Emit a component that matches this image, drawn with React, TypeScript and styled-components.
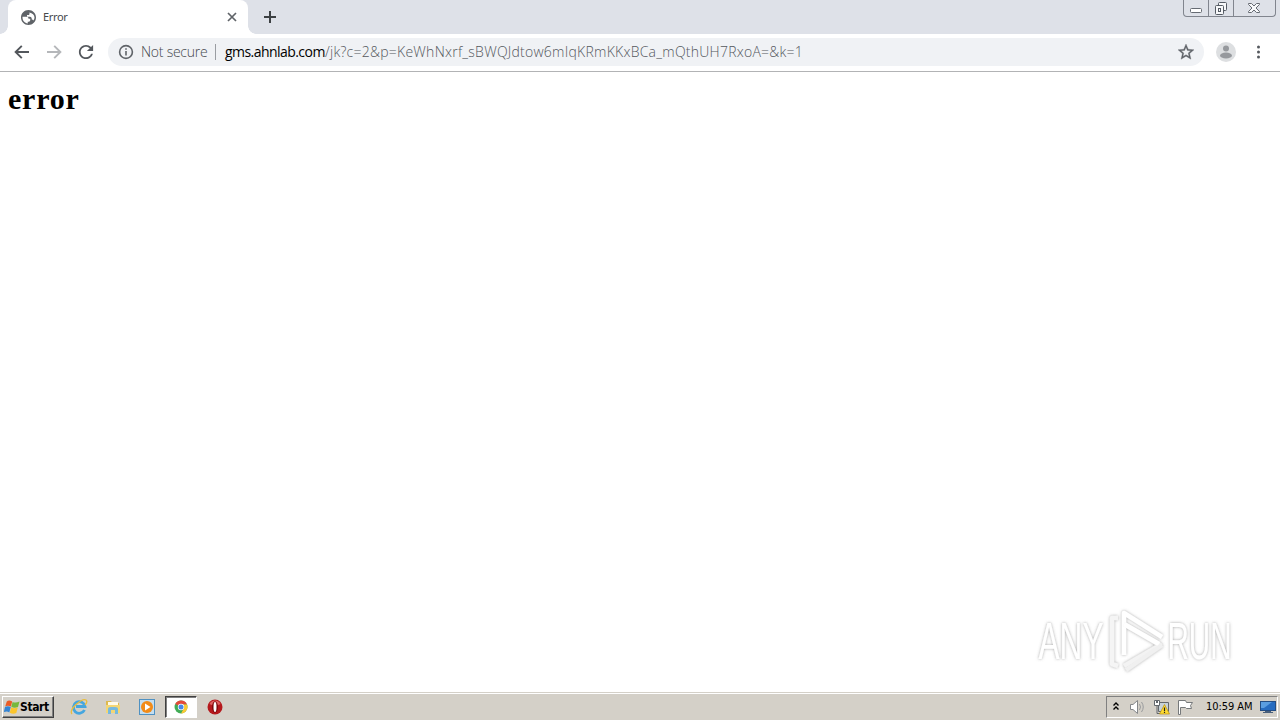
import React from 'react';
import styled, { createGlobalStyle } from 'styled-components';

const GlobalStyle = createGlobalStyle`
  body { margin: 0; background: #fff; overflow: hidden; }
  * { box-sizing: border-box; }
  svg { display: block; flex: none; }
`;

const Screen = styled.div`
  position: relative;
  width: 1280px;
  height: 720px;
  display: flex;
  flex-direction: column;
  font-family: 'DejaVu Sans Condensed', 'DejaVu Sans', sans-serif;
`;

const TabStrip = styled.div`
  height: 34px;
  display: flex;
  background: #dee1e8;
  padding-left: 8px;
`;

const Tab = styled.div`
  position: relative;
  width: 240px;
  display: flex;
  align-items: center;
  padding: 0 10px 0 13px;
  background: #fff;
  border-radius: 8px 8px 0 0;
  &::before, &::after {
    content: '';
    position: absolute;
    bottom: 0;
    width: 8px;
    height: 8px;
  }
  &::before { left: -8px; background: radial-gradient(circle at 0 0, transparent 7.5px, #fff 8px); }
  &::after { right: -8px; background: radial-gradient(circle at 100% 0, transparent 7.5px, #fff 8px); }
`;

const TabTitle = styled.span`
  flex: 1;
  margin-left: 7px;
  font: 11px/14px 'Noto Sans', sans-serif;
  letter-spacing: -0.35px;
  color: #45484c;
`;

const NewTab = styled.div`
  padding: 10px 0 0 15px;
`;

const WindowControls = styled.div`
  display: flex;
  width: 93px;
  height: 17px;
  margin: 0 4px 0 auto;
  border: 1px solid #81858e;
  border-top: 0;
  border-radius: 0 0 4px 4px;
`;

const ControlCell = styled.div<{ $w: number }>`
  width: ${p => p.$w}px;
  display: flex;
  justify-content: center;
  & + & { border-left: 1px solid #81858e; }
`;

const Toolbar = styled.div`
  height: 38px;
  display: flex;
  align-items: center;
  padding: 0 12px 2px 14px;
  border-bottom: 1px solid #b2b3b5;
  background: #fff;
`;

const NavButtons = styled.div`
  display: flex;
  gap: 16px;
  margin-right: 14px;
`;

const AddressBar = styled.div`
  flex: none;
  width: 1096px;
  height: 28px;
  display: flex;
  align-items: center;
  padding: 0 10px;
  border-radius: 14px;
  background: #f0f2f5;
  font: 300 14px/20px 'Open Sans', sans-serif;
  white-space: pre;
`;

const Security = styled.span`
  width: 67px;
  margin-left: 7px;
  color: #44484d;
  letter-spacing: -0.25px;
`;

const Divider = styled.i`
  width: 1px;
  height: 16px;
  margin: 0 9px 0 7px;
  background: #9a9da2;
`;

const Host = styled.span`
  width: 100px;
  color: #000;
  font-weight: 400;
  letter-spacing: -0.55px;
`;

const Path = styled.span`
  flex: 1;
  color: #54585d;
  letter-spacing: 0.25px;
`;

const ToolbarEnd = styled.div`
  display: flex;
  align-items: center;
  gap: 12px;
  margin-left: 12px;
`;

const Page = styled.main`
  flex: 1;
  background: #fff;
`;

const Heading = styled.h1`
  margin: 0;
  padding: 10px 8px;
  font: bold 30px/34px 'Liberation Serif', serif;
  letter-spacing: 0.8px;
  color: #000;
`;

const Watermark = styled.svg`
  position: absolute;
  left: 1030px;
  top: 602px;
`;

const Taskbar = styled.footer`
  height: 28px;
  display: flex;
  align-items: center;
  padding: 2px 2px 2px;
  border-top: 1px solid #d4d0c8;
  box-shadow: inset 0 1px #fff;
  background: #d4d0c8;
`;

const StartButton = styled.div`
  width: 52px;
  height: 22px;
  display: flex;
  align-items: center;
  padding-left: 1px;
  border: 1px solid;
  border-color: #fff #404040 #404040 #fff;
  box-shadow: inset -1px -1px #808080;
  font: bold 12px/16px 'DejaVu Sans Condensed', sans-serif;
  letter-spacing: -0.4px;
  color: #000;
`;

const Launchers = styled.div`
  display: flex;
  margin-left: 9px;
`;

const Launcher = styled.div<{ $active?: boolean }>`
  width: 32px;
  height: 22px;
  margin-right: 2px;
  display: flex;
  align-items: center;
  justify-content: center;
  ${p => p.$active && `
    background: #fff;
    border: 1px solid;
    border-color: #404040 #fff #fff #404040;
    box-shadow: inset 1px 1px #808080;
  `}
`;

const Tray = styled.div`
  width: 172px;
  height: 22px;
  margin-left: auto;
  display: flex;
  align-items: center;
  padding-left: 5px;
  border: 1px solid;
  border-color: #808080 #fff #fff #808080;
`;

const TrayIcons = styled.div`
  display: flex;
  align-items: center;
  gap: 8px;
`;

const Clock = styled.span`
  width: 47px;
  margin: 0 7px 0 12px;
  font: 11px/14px 'DejaVu Sans Condensed', sans-serif;
  letter-spacing: -0.05px;
  white-space: nowrap;
  color: #000;
`;

const Arrow = ({ color, flip }: { color: string; flip?: boolean }) => (
  <svg width="16" height="16" viewBox="0 0 16 16" fill="none" stroke={color} strokeWidth="1.9">
    <path d={flip ? 'M1 8H14M8.2 1.8L14.4 8L8.2 14.2' : 'M15 8H2M7.8 1.8L1.6 8L7.8 14.2'} />
  </svg>
);

export default function App() {
  return (
    <Screen>
      <GlobalStyle />
      <TabStrip>
        <Tab>
          <svg width="15" height="15" viewBox="2 2 20 20" fill="#5f6368">
            <path d="M12 2C6.48 2 2 6.48 2 12s4.48 10 10 10 10-4.480 10-10S17.520 2 12 2zm-1 17.930c-3.950-.490-7-3.850-7-7.930l.1-1 5.100.1c2 0 2.800 1 2.800 2.500h2.300v2.200c0 1-.8 1.700-1.900 1.700H11v2.430zM18.500 16c-.4-.8-1.100-1.200-2.100-1.200 0-2.700-.6-3.800-2.600-3.800H10V8.500h2c.8 0 1.300-.6 1.300-1.300V5.300c3.900.7 6.700 3.500 6.700 6.700 0 1.500-.5 2.800-1.500 4z" />
          </svg>
          <TabTitle>Error</TabTitle>
          <svg width="12" height="12" viewBox="0 0 12 12" stroke="#5f6368" strokeWidth="1.7"><path d="M2 2L10 10M10 2L2 10" /></svg>
        </Tab>
        <NewTab>
          <svg width="14" height="14" viewBox="0 0 14 14" stroke="#3c4043" strokeWidth="2"><path d="M1 7H13M7 1V13" /></svg>
        </NewTab>
        <WindowControls>
          <ControlCell $w={25}>
            <svg width="14" height="16" fill="#fff" stroke="#666b73"><rect x="1.500" y="8.500" width="11" height="4" rx="1" /></svg>
          </ControlCell>
          <ControlCell $w={25}>
            <svg width="14" height="16" fill="#f7f8fa" stroke="#555b64"><rect x="4.500" y="2.500" width="8" height="8" rx="1" /><rect x="1.500" y="5.500" width="8" height="9" rx="1" /><rect x="4.500" y="8.500" width="2" height="3" /></svg>
          </ControlCell>
          <ControlCell $w={43}>
            <svg width="14" height="16" viewBox="0 0 14 16" fill="#f7f8fa" stroke="#666b73"><path d="M1.500 3.500H4.500L7 6L9.500 3.500H12.500V4.500L9 8L12.500 11.500V12.500H9.500L7 10L4.500 12.500H1.500V11.500L5 8L1.500 4.500Z" /></svg>
          </ControlCell>
        </WindowControls>
      </TabStrip>

      <Toolbar>
        <NavButtons>
          <Arrow color="#53575c" />
          <Arrow color="#b5b7ba" flip />
          <svg width="16" height="16" viewBox="3 3 18 18" fill="#53575c"><path d="M17.650 6.350C16.200 4.900 14.210 4 12 4c-4.420 0-7.990 3.580-7.990 8s3.570 8 7.990 8c3.730 0 6.840-2.550 7.730-6h-2.080c-.82 2.330-3.040 4-5.650 4-3.310 0-6-2.690-6-6s2.690-6 6-6c1.660 0 3.140.69 4.220 1.780L13 11h7V4l-2.350 2.350z" /></svg>
        </NavButtons>
        <AddressBar>
          <svg width="16" height="16" viewBox="0 0 16 16" fill="none" stroke="#5f6368" strokeWidth="1.600"><circle cx="8" cy="8" r="6.400" /><path d="M8 7V11.600M8 4.200V5.800" /></svg>
          <Security>Not secure</Security>
          <Divider />
          <Host>gms.ahnlab.com</Host>
          <Path>/jk?c=2&amp;p=KeWhNxrf_sBWQJdtow6mIqKRmKKxBCa_mQthUH7RxoA=&amp;k=1</Path>
          <svg width="16" height="16" viewBox="2 2 20 20" fill="#5f6368" stroke="#5f6368" strokeWidth=".4"><path d="M22 9.240l-7.190-.62L12 2 9.190 8.630 2 9.240l5.460 4.730L5.820 21 12 17.270 18.180 21l-1.630-7.030L22 9.240zM12 15.400l-3.760 2.270 1-4.280-3.320-2.880 4.380-.38L12 6.100l1.710 4.040 4.380.38-3.320 2.880 1 4.280L12 15.400z" /></svg>
        </AddressBar>
        <ToolbarEnd>
          <svg width="20" height="20"><circle cx="10" cy="10" r="10" fill="#dddfe1" /><circle cx="10" cy="6.500" r="3" fill="#96999d" /><ellipse cx="10" cy="13.500" rx="6" ry="3" fill="#96999d" /></svg>
          <svg width="20" height="16" fill="#55595e"><circle cx="10.500" cy="3" r="1.500" /><circle cx="10.500" cy="8" r="1.500" /><circle cx="10.500" cy="13" r="1.500" /></svg>
        </ToolbarEnd>
      </Toolbar>

      <Page>
        <Heading>error</Heading>
      </Page>

      <Watermark width="230" height="80" viewBox="0 0 230 80">
        <defs>
          <linearGradient id="letters" x1="0" y1="20" x2="0" y2="59" gradientUnits="userSpaceOnUse">
            <stop offset="0.5" stopColor="#fff" /><stop offset="0.54" stopColor="#e8e8e8" /><stop offset="1" stopColor="#f2f2f2" />
          </linearGradient>
          <filter id="glow" x="-10%" y="-20%" width="120%" height="140%"><feDropShadow dx="0" dy="0" stdDeviation="1.800" floodColor="#777" floodOpacity="0.65" /></filter>
        </defs>
        <g filter="url(#glow)">
          <g fill="url(#letters)" fontFamily="'Liberation Sans Narrow', 'Liberation Sans', sans-serif" fontSize="51">
            <text transform="translate(8.500 57) scale(.62 1)">ANY</text>
            <text transform="translate(137.500 57) scale(.58 1)">RUN</text>
          </g>
          <g fill="none" strokeWidth="4.500" strokeLinejoin="round">
            <path d="M88 16H82V62L88 64" stroke="#f5f5f5" />
            <path d="M94 53V11L132 35" stroke="#fff" />
            <path d="M94 22L130 43L94 64" stroke="#f3f3f3" />
            <path d="M94 22L129 42" stroke="#fff" />
            <path d="M96 68L132 43" stroke="#f0f0f0" />
          </g>
        </g>
      </Watermark>

      <Taskbar>
        <StartButton>
          <svg width="16" height="16" viewBox="0 0 16 16">
            <path d="M2.800 2.500Q5 .5 8.200 2.500L6.900 7.600Q4 6 1.200 7.500Z" fill="#ea5b25" />
            <path d="M8.600 2.900Q11.500 4.500 15.500 2.500L14 7.900Q10.500 9.600 7.300 7.800Z" fill="#76b83b" />
            <path d="M1 8Q4 6.500 6.800 8.100L5.300 13.400Q3 11.900 -.2 13.200Z" fill="#3484d3" />
            <path d="M7.200 8.300Q10.500 10 13.800 8.400L12.300 14Q9 15.500 5.800 13.700Z" fill="#fbc52c" />
          </svg>
          Start
        </StartButton>
        <Launchers>
          <Launcher>
            <svg width="18" height="18" viewBox="0 0 18 18" fill="none"><path d="M14.500 12A5.800 5.800 0 1 1 15 8.500H6" stroke="#45a6df" strokeWidth="2.800" /><path d="M2 16Q-.5 13 5.500 7Q13 0 16 2Q18 4 15 7" stroke="#e9bd3d" strokeWidth="1.300" /></svg>
          </Launcher>
          <Launcher>
            <svg width="18" height="18" viewBox="0 0 18 18"><path d="M2 3H7L8.500 5H15V15H2Z" fill="#ddb94f" /><path d="M4 4H14V8H4Z" fill="#fffbe8" /><path d="M2 7H16V15H2Z" fill="#f3d674" /><path d="M4 16V11Q4 9 7 9H11Q14 9 14 11V16H11V12H7V16Z" fill="#75b9df" /></svg>
          </Launcher>
          <Launcher>
            <svg width="16" height="16"><rect x="0.500" y="0.500" width="15" height="15" fill="#c4def0" stroke="#4f91c2" /><circle cx="8" cy="8" r="6" fill="#f28b18" /><path d="M6 4.500L11.500 8L6 11.500Z" fill="#fff" /></svg>
          </Launcher>
          <Launcher $active>
            <svg width="14" height="14" viewBox="0 0 14 14"><circle cx="7" cy="7" r="6.500" fill="#41ac56" /><path d="M7 7L1.200 4A6.500 6.500 0 0 1 13 4.500H7Z" fill="#e4493a" /><path d="M7 4.500H13A6.500 6.500 0 0 1 7 13.500L10 8Z" fill="#fbc934" /><circle cx="7" cy="7" r="3.200" fill="#fff" /><circle cx="7" cy="7" r="2.500" fill="#4687e8" /></svg>
          </Launcher>
          <Launcher>
            <svg width="16" height="16"><circle cx="8" cy="8" r="7.500" fill="#b5191d" /><path d="M2.500 5A6 6 0 0 1 13.500 5Q8 8 2.500 5Z" fill="#df6262" /><ellipse cx="8" cy="8" rx="3" ry="5.700" fill="#7c090c" /><ellipse cx="8" cy="8" rx="1.500" ry="5" fill="#fff" /></svg>
          </Launcher>
        </Launchers>
        <Tray>
          <TrayIcons>
            <svg width="8" height="12" fill="none" stroke="#000" strokeWidth="1.400"><path d="M1.500 4.500L4 2L6.500 4.500M1.500 8.500L4 6L6.500 8.500" /></svg>
            <svg width="18" height="16" viewBox="0 0 18 16" fill="none" stroke="#85878a"><path d="M2.500 5.500H5L9.500 1.500V14.500L5 10.500H2.500Z" fill="#fff" /><path d="M11.500 5Q13.500 8 11.500 11M13.500 3Q17 8 13.500 13" stroke="#999b9d" /></svg>
            <svg width="16" height="16" viewBox="0 0 16 16"><path d="M4.500 3.500H14.500V12.500H4.500Z" fill="#c7d2d8" stroke="#62676c" /><path d="M.5 1.500H5.500V6.500H.5Z" fill="#fff" stroke="#62676c" /><path d="M2.500 1V4M3.500 1V4M3 7V14.500H6" fill="none" stroke="#62676c" /><path d="M10.500 5.500L15.500 15H5.500Z" fill="#ffdc32" stroke="#b98e10" strokeWidth=".7" /><path d="M10.500 8.500V12M10.500 12.800V14" stroke="#222" strokeWidth="1.200" /></svg>
            <svg width="16" height="16" fill="#fff" stroke="#76797b"><path d="M.5 15.500V1.500H7.500L8.500 3.500H14.500L12.500 6.500L13.500 9.500H8.500L7.500 8.500H2.500V15.500Z" /></svg>
          </TrayIcons>
          <Clock>10:59 AM</Clock>
          <svg width="16" height="16"><rect x="0.500" y="2.500" width="15" height="9" fill="#276cc0" stroke="#244d83" /><path d="M1 3H12L4 9H1Z" fill="#5a9de0" /><path d="M5 12H11V13H13V14H3V13H5Z" fill="#495f7b" /></svg>
        </Tray>
      </Taskbar>
    </Screen>
  );
}
